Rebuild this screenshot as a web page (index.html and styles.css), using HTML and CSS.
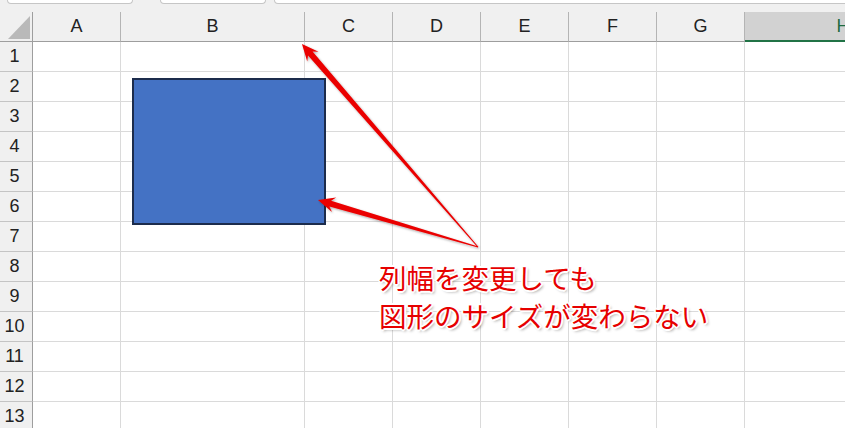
FILE: index.html
```html
<!DOCTYPE html>
<html lang="ja">
<head>
   <meta charset="UTF-8">
   <meta name="viewport" content="width=device-width, initial-scale=1.0">
   <title>列幅と図形</title>
   <link rel="stylesheet" href="styles.css">
</head>
<body>

   <div class="window">
      <!-- 上部のタブ -->
      <div class="tabs">
         <span class="tab tab-1"></span>
         <span class="tab tab-2"></span>
         <span class="tab tab-3"></span>
      </div>

      <!-- シート -->
      <div class="sheet">
         <div class="corner"><span class="corner-mark"></span></div>
         <div class="ch">A</div><div class="ch">B</div><div class="ch">C</div><div class="ch">D</div>
         <div class="ch">E</div><div class="ch">F</div><div class="ch">G</div><div class="ch ch-sel">H</div>

         <div class="rh">1</div><div></div><div></div><div></div><div></div><div></div><div></div><div></div><div></div>
         <div class="rh">2</div><div></div><div></div><div></div><div></div><div></div><div></div><div></div><div></div>
         <div class="rh">3</div><div></div><div></div><div></div><div></div><div></div><div></div><div></div><div></div>
         <div class="rh">4</div><div></div><div></div><div></div><div></div><div></div><div></div><div></div><div></div>
         <div class="rh">5</div><div></div><div></div><div></div><div></div><div></div><div></div><div></div><div></div>
         <div class="rh">6</div><div></div><div></div><div></div><div></div><div></div><div></div><div></div><div></div>
         <div class="rh">7</div><div></div><div></div><div></div><div></div><div></div><div></div><div></div><div></div>
         <div class="rh">8</div><div></div><div></div><div></div><div></div><div></div><div></div><div></div><div></div>
         <div class="rh">9</div><div></div><div></div><div></div><div></div><div></div><div></div><div></div><div></div>
         <div class="rh">10</div><div></div><div></div><div></div><div></div><div></div><div></div><div></div><div></div>
         <div class="rh">11</div><div></div><div></div><div></div><div></div><div></div><div></div><div></div><div></div>
         <div class="rh">12</div><div></div><div></div><div></div><div></div><div></div><div></div><div></div><div></div>
         <div class="rh">13</div><div></div><div></div><div></div><div></div><div></div><div></div><div></div><div></div>
      </div>

      <!-- シートの上に置いた図形と注釈 -->
      <div class="shape"></div>

      <svg class="arrows" width="845" height="428" viewBox="0 0 845 428">
         <defs>
            <filter id="shadow" x="-10%" y="-10%" width="120%" height="120%">
               <feDropShadow dx="1" dy="1.2" stdDeviation="0.8" flood-color="#000" flood-opacity="0.35"/>
            </filter>
         </defs>
         <g filter="url(#shadow)" fill="#ea0000">
            <polygon transform="translate(478 247) rotate(-130.93)"
               points="0,-0.5 256,-3 252,-7.5 268.7,0 252,7.5 256,3 0,0.5"/>
            <polygon transform="translate(478 247) rotate(-163.63)"
               points="0,-0.5 154,-3 150,-7.5 166.8,0 150,7.5 154,3 0,0.5"/>
         </g>
      </svg>

      <p class="note">列幅を変更しても<br>図形のサイズが変わらない</p>
   </div>

</body>
</html>
```

FILE: styles.css
```css
body {
   margin: 0;
   background-color: #fff;
   overflow: hidden;
   font-family: "Liberation Sans", Arial, sans-serif;
}

.window {
   position: relative;
   width: 845px;
   height: 428px;
   overflow: hidden;
   background-color: #f0f0f0;
}

/* 上部のタブ */
.tabs {
   display: flex;
   height: 12px;
   align-items: flex-start;
}

.tab {
   display: block;
   height: 3px;
   background-color: #fff;
   border: 1px solid #c6c6c6;
   border-top: none;
   border-radius: 0 0 5px 5px;
}

.tab-1 {
   margin-left: 7px;
   width: 124px;
}

.tab-2 {
   margin-left: 27px;
   width: 104px;
}

.tab-3 {
   margin-left: 8px;
   flex: 1;
   margin-right: -10px;
}

/* シート */
.sheet {
   display: grid;
   grid-template-columns: 33px 88px 184px 88px 88px 88px 88px 88px 196px;
   grid-auto-rows: 30px;
   width: 953px;
   background-color: #fff;
}

.sheet > div {
   box-sizing: border-box;
   border-right: 1px solid #dadada;
   border-bottom: 1px solid #dadada;
}

.corner,
.ch,
.rh {
   background-color: #f0f0f0;
   color: #222;
   font-size: 18px;
   display: flex;
   align-items: center;
   justify-content: center;
}

.sheet > .corner {
   border-right: 1px solid #9e9e9e;
   border-bottom: 1px solid #9e9e9e;
   justify-content: flex-end;
   align-items: flex-end;
   padding: 0 2px 2px 0;
}

.corner-mark {
   width: 22px;
   height: 23px;
   background-color: #b9b9b9;
   clip-path: polygon(100% 0, 100% 100%, 0 100%);
}

.sheet > .ch {
   border-right: 1px solid #b4b4b4;
   border-bottom: 1px solid #9e9e9e;
}

.sheet > .ch-sel {
   background-color: #d2d2d2;
   color: #1d6b40;
   border-bottom: 2px solid #217346;
   border-right: none;
}

.sheet > .rh {
   border-right: 1px solid #9e9e9e;
   border-bottom: 1px solid #c4c4c4;
   padding-right: 3px;
}

/* 図形 */
.shape {
   position: absolute;
   left: 132px;
   top: 78px;
   width: 194px;
   height: 147px;
   box-sizing: border-box;
   background-color: #4472c4;
   border: 2px solid #1c2c4c;
}

.arrows {
   position: absolute;
   left: 0;
   top: 0;
   pointer-events: none;
}

/* 注釈 */
.note {
   position: absolute;
   left: 379px;
   top: 258px;
   margin: 0;
   font-family: "Noto Sans CJK JP", sans-serif;
   font-size: 27.5px;
   line-height: 38px;
   color: #e60000;
   white-space: nowrap;
   text-shadow:
      1px 1px 0 #fff, -1px -1px 0 #fff, 1px -1px 0 #fff, -1px 1px 0 #fff,
      2px 0 0 #fff, 0 2px 0 #fff, -2px 0 0 #fff, 0 -2px 0 #fff,
      2px 2px 3px rgba(0, 0, 0, 0.4);
}
```
